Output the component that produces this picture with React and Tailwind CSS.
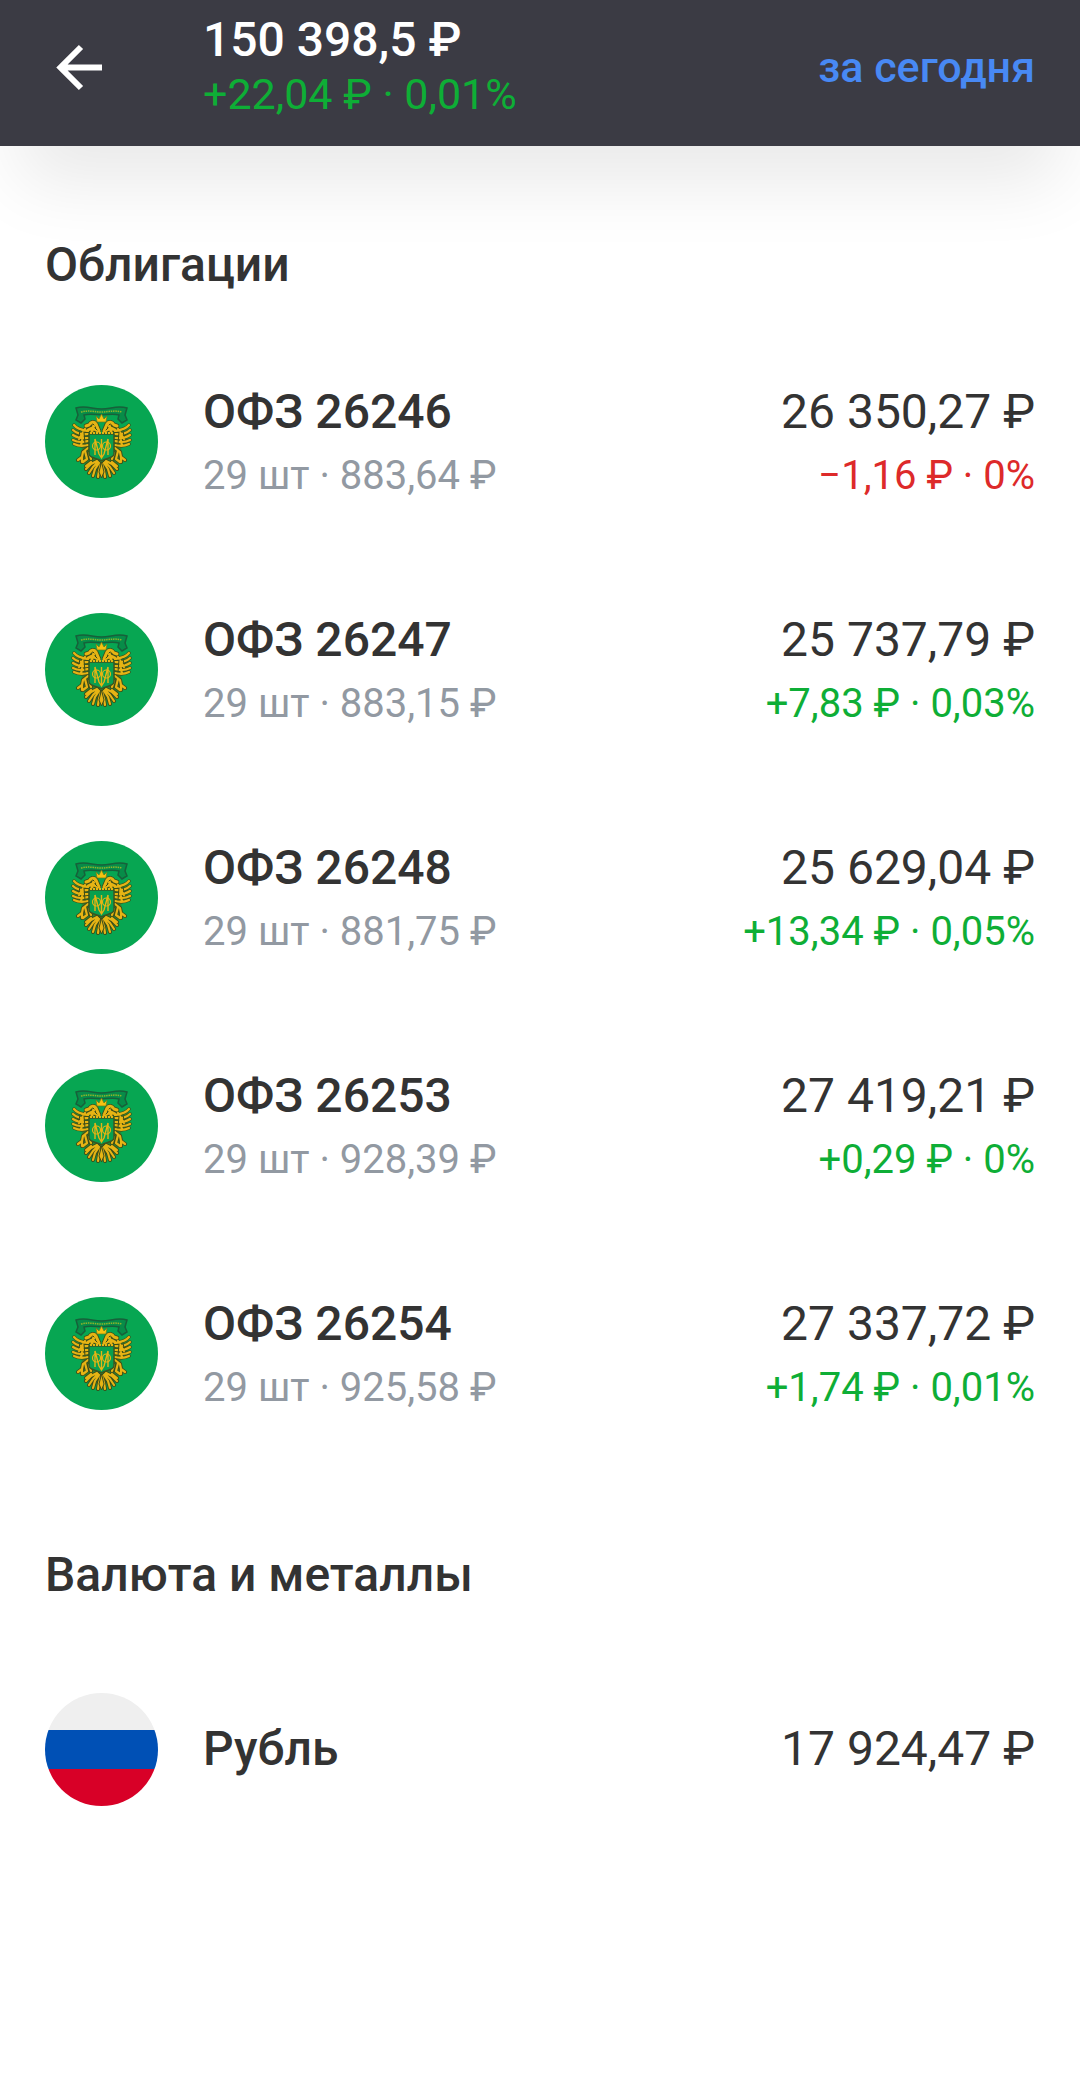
const bonds = [
    { name: 'ОФЗ 26246', info: '29 шт · 883,64 ₽', total: '26 350,27 ₽', change: '−1,16 ₽ · 0%', down: true },
    { name: 'ОФЗ 26247', info: '29 шт · 883,15 ₽', total: '25 737,79 ₽', change: '+7,83 ₽ · 0,03%' },
    { name: 'ОФЗ 26248', info: '29 шт · 881,75 ₽', total: '25 629,04 ₽', change: '+13,34 ₽ · 0,05%' },
    { name: 'ОФЗ 26253', info: '29 шт · 928,39 ₽', total: '27 419,21 ₽', change: '+0,29 ₽ · 0%' },
    { name: 'ОФЗ 26254', info: '29 шт · 925,58 ₽', total: '27 337,72 ₽', change: '+1,74 ₽ · 0,01%' },
];

const WING = 'M43 46 C38 45 33 45 29 40 M43 49 C38 49 33 50 28 45 M43 53 C38 53 34 54 28 50 M43 56 C38 57 34 58 28 55 M43 60 C39 61 35 62 29 59 M40 44 L34 54 M38 50 L36 61';
const LEG = 'M43 63 L38 67 L37 72 L33 75 M40 66 L42 74 L38 77 M44 68 L46 74 M37 72 L37 77';
const TAIL = 'M52 76 L46 79 L41 84 M53 77 L48 82 L44 88 M54 78 L50 84 L48 91 M56 79 L54 86 L53 92 M46 77 L41 81';
const HEAD = 'M54 46 L51 39 C49 36 46 37 44 40 L41 41 M53 46 L47 43 L43 45 M49 40 L47 46';

// One half of the eagle, drawn on the left and mirrored for the right side
const EagleHalf = () => (
    <g fill="none" strokeLinecap="round" strokeLinejoin="round">
        <path d="M44 44 L30 41 L29 58 L37 63 L35 74 L44 83 L56 90 V44 Z" fill="#4a6a1c" fillOpacity="0.6" />
        <path d={WING} stroke="#3c4c18" strokeWidth="3.500" />
        <path d={LEG} stroke="#3c4c18" strokeWidth="4" />
        <path d={TAIL} stroke="#3c4c18" strokeWidth="4" />
        <path d={HEAD} stroke="#3c4c18" strokeWidth="4.500" />
        <path d={WING} stroke="#e6b414" strokeWidth="2.200" />
        <path d={LEG} stroke="#e6b414" strokeWidth="2.200" />
        <path d={TAIL} stroke="#e6b414" strokeWidth="2.200" />
        <path d={HEAD} stroke="#e6b414" strokeWidth="3" />
        <path d="M39 47 L40 59 M35 46 L34 51 M48 39 L49 40 M50 43 L52 45" stroke="#3c4c18" strokeWidth="1" />
    </g>
);

const BondIcon = () => (
    <svg viewBox="0 0 113 113" className="size-[113px] shrink-0" aria-hidden="true">
        <circle cx="56.5" cy="56.5" r="56.5" fill="#07a652" />
        <EagleHalf />
        <g transform="matrix(-1 0 0 1 113 0)">
            <EagleHalf />
        </g>
        {/* ribbon */}
        <path d="M31 23 C41 20 47 24 56.500 24 C66 24 72 20 82 23 L80 30 L82 35 L77 38 L73 34 L74 30 C67 28 62 30 56.500 30 C51 30 46 28 39 30 L40 34 L36 38 L31 35 L33 30 Z" fill="#078c48" stroke="#17603a" strokeWidth="1.500" />
        <path d="M36 27 C44 25 50 27 56.500 27 C63 27 69 25 77 27" fill="none" stroke="#8fb52a" strokeWidth="1.500" strokeDasharray="1.5 0.8" />
        {/* crown */}
        <path d="M52 37 L51 31 L54 34 L56.500 29 L59 34 L62 31 L61 37 Z" fill="#f5c211" stroke="#6d7a18" strokeWidth="0.700" />
        {/* shield */}
        <path d="M44 49 H69 V69 C69 73 61 73 56.500 76 C52 73 44 73 44 69 Z" fill="#08a04e" stroke="#3c5520" strokeWidth="1.500" />
        <path d="M45 48 H68" stroke="#e6b414" strokeWidth="2" strokeDasharray="2 1" />
        <path d="M50 54 V70 M63 54 V70 M50 54 L54 69 M63 54 L59 69 M56.500 54 V73 M54 69 L56.500 73 L59 69" fill="none" stroke="#e6b414" strokeWidth="1.400" />
        <circle cx="51.500" cy="61" r="4" fill="none" stroke="#e6b414" strokeWidth="1.200" />
        <circle cx="61.500" cy="61" r="4" fill="none" stroke="#e6b414" strokeWidth="1.200" />
        <path d="M56.500 77 L59 87 L56.500 93 L54 87 Z" fill="#e6b414" stroke="#3c4c18" strokeWidth="1" />
    </svg>
);

const RubleIcon = () => (
    <div className="flex size-[113px] shrink-0 flex-col overflow-hidden rounded-full" aria-hidden="true">
        <div className="flex-1 bg-[#efefef]" />
        <div className="h-[39px] bg-[#0050b5]" />
        <div className="flex-1 bg-[#d80027]" />
    </div>
);

const AssetRow = ({ icon, name, info, total, change, down }) => (
    <li className="flex min-h-[130px] items-center gap-[45px]">
        {icon}
        <div className={info ? 'flex-1 pt-1.5' : 'flex-1'}>
            <p className="text-[48px] leading-[64px] font-medium">{name}</p>
            {info && <p className="text-[40px] leading-[64px] text-[#9299a2]">{info}</p>}
        </div>
        <div className={change ? 'pt-1.5 text-right' : 'text-right'}>
            <p className="text-[48px] leading-[64px]">{total}</p>
            {change && (
                <p className={`text-[40px] leading-[64px] ${down ? 'text-[#dd2a2a]' : 'text-[#0eae36]'}`}>{change}</p>
            )}
        </div>
    </li>
);

const Section = ({ title, children }) => (
    <section>
        <h2 className="text-[48px] leading-[64px] font-medium">{title}</h2>
        <ul className="mt-[77px] flex flex-col gap-[94px]">{children}</ul>
    </section>
);

export default function App() {
    return (
        <div className="min-h-screen bg-white font-['Roboto','Noto_Sans',sans-serif] text-[#333333]">
            <header className="flex h-[146px] items-center bg-[#3b3b44] px-[45px] pb-3 shadow-[0_56px_72px_-20px_rgba(0,0,0,0.09)]">
                <button type="button" aria-label="Назад" className="mr-[91px] text-white">
                    <svg viewBox="0 0 67 67" className="size-[67px]" fill="none" stroke="currentColor" strokeWidth="6">
                        <path d="M57 33.500 H17 M36 13 L15.500 33.500 L36 54" />
                    </svg>
                </button>
                <div className="flex-1">
                    <p className="text-[48px] leading-[54px] font-medium text-white">150 398,5 ₽</p>
                    <p className="text-[43px] leading-[54px] text-[#0eae36]">+22,04 ₽ · 0,01%</p>
                </div>
                <button type="button" className="text-[43px] leading-[54px] font-medium text-[#4889f4]">за сегодня</button>
            </header>
            <main className="flex flex-col gap-[123px] px-[45px] pt-[87px] pb-12">
                <Section title="Облигации">
                    {bonds.map((bond) => (
                        <AssetRow key={bond.name} icon={<BondIcon />} {...bond} />
                    ))}
                </Section>
                <Section title="Валюта и металлы">
                    <AssetRow icon={<RubleIcon />} name="Рубль" total="17 924,47 ₽" />
                </Section>
            </main>
        </div>
    );
}
